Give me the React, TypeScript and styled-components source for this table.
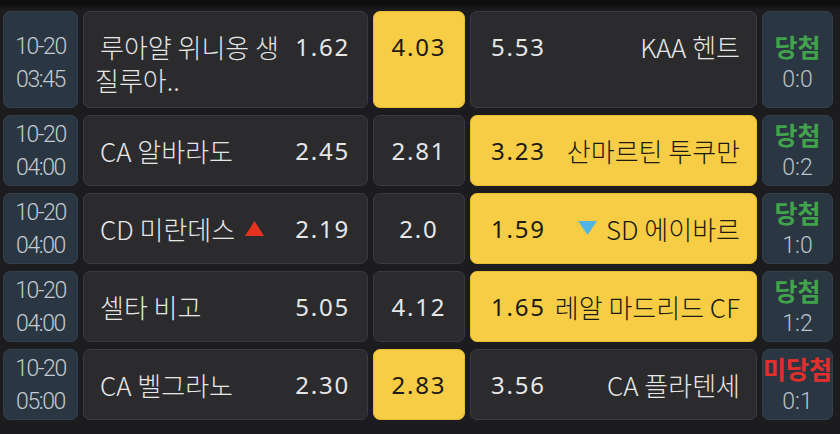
import React from "react";
import styled, { createGlobalStyle, css } from "styled-components";

const GlobalStyle = createGlobalStyle`
  html, body {
    margin: 0;
    padding: 0;
    background: linear-gradient(#0b0b0c 0px, #0f0f11 5px, #1c1c1e 10px, #1c1c1e 100%);
    min-height: 100%;
  }
  body {
    width: 840px;
    height: 434px;
    overflow: hidden;
    font-family: "Noto Sans CJK KR", "Noto Sans", sans-serif;
  }
`;

const Board = styled.div`
  display: flex;
  flex-direction: column;
  gap: 7px;
  padding: 11px 7px 0 3px;
`;

const Row = styled.div<{ $tall?: boolean }>`
  display: grid;
  grid-template-columns: 75px 285px 92px 287px 71px;
  column-gap: 5px;
  height: ${(p) => (p.$tall ? 97 : 71)}px;
`;

const cellBase = css<{ $tall?: boolean }>`
  box-sizing: border-box;
  border-radius: 7px;
  display: flex;
  ${(p) =>
    p.$tall
      ? css`
          align-items: flex-start;
          padding-top: 18px;
        `
      : css`
          align-items: center;
        `}
`;

const InfoCell = styled.div<{ $tall?: boolean }>`
  ${cellBase};
  flex-direction: column;
  justify-content: ${(p) => (p.$tall ? "flex-start" : "center")};
  align-items: center;
  background: #2a3641;
  border: 1px solid #33404b;
`;

const TimeLine = styled.div`
  font-family: Roboto, "Noto Sans", sans-serif;
  font-weight: 300;
  font-size: 23px;
  line-height: 33px;
  letter-spacing: -1.4px;
  color: #c3cad1;
`;

const StatusText = styled.div<{ $win: boolean }>`
  font-family: "Noto Sans CJK KR", sans-serif;
  font-weight: 700;
  font-size: 25px;
  line-height: 33px;
  color: ${(p) => (p.$win ? "#41a34c" : "#e1302c")};
`;

const ScoreText = styled.div`
  font-family: Roboto, "Noto Sans", sans-serif;
  font-weight: 300;
  font-size: 23px;
  line-height: 33px;
  color: #b9c3cb;
`;

const OddsCell = styled.div<{ $tall?: boolean; $picked?: boolean; $side: "home" | "draw" | "away" }>`
  ${cellBase};
  background: ${(p) => (p.$picked ? "#f6cd45" : "#2b2b2d")};
  border: 1px solid ${(p) => (p.$picked ? "#e9bd33" : "#3b3b3e")};
  justify-content: ${(p) => (p.$side === "draw" ? "center" : "space-between")};
  padding-left: ${(p) => (p.$side === "home" ? 11 : p.$side === "away" ? 20 : 0)}px;
  padding-right: ${(p) => (p.$side === "home" ? 17 : p.$side === "away" ? 16 : 0)}px;
  color: ${(p) => (p.$picked ? "#1b1a14" : "#e6e6e6")};
`;

const Name = styled.span`
  font-family: "Noto Sans CJK KR", sans-serif;
  font-weight: 300;
  font-size: 26px;
  line-height: 33px;
  white-space: pre-line;
  text-indent: 5px;
  display: flex;
  align-items: center;
`;

const AwayName = styled(Name)`
  text-indent: 0;
`;

const Odds = styled.span`
  font-family: "Noto Sans", sans-serif;
  font-weight: 400;
  font-size: 24px;
  line-height: 33px;
  letter-spacing: 1.8px;
`;

const Arrow = styled.svg<{ $before?: boolean }>`
  width: 19px;
  height: 15px;
  flex: none;
  margin: ${(p) => (p.$before ? "0 9px 0 0" : "0 0 0 10px")};
`;

const UpArrow = () => (
  <Arrow viewBox="0 0 19 15">
    <polygon points="9.5,0 19,15 0,15" fill="#e5331f" />
  </Arrow>
);

const DownArrow = () => (
  <Arrow viewBox="0 0 19 15" $before>
    <polygon points="0,0 19,0 9.5,14" fill="#52b6e4" />
  </Arrow>
);

type Match = {
  date: string;
  time: string;
  home: string;
  homeOdds: string;
  draw: string;
  awayOdds: string;
  away: string;
  pick: "home" | "draw" | "away";
  win: boolean;
  score: string;
  homeUp?: boolean;
  awayDown?: boolean;
  tall?: boolean;
};

const matches: Match[] = [
  { date: "10-20", time: "03:45", home: "루아얄 위니옹 생\n질루아..", homeOdds: "1.62", draw: "4.03", awayOdds: "5.53", away: "KAA 헨트", pick: "draw", win: true, score: "0:0", tall: true },
  { date: "10-20", time: "04:00", home: "CA 알바라도", homeOdds: "2.45", draw: "2.81", awayOdds: "3.23", away: "산마르틴 투쿠만", pick: "away", win: true, score: "0:2" },
  { date: "10-20", time: "04:00", home: "CD 미란데스", homeOdds: "2.19", draw: "2.0", awayOdds: "1.59", away: "SD 에이바르", pick: "away", win: true, score: "1:0", homeUp: true, awayDown: true },
  { date: "10-20", time: "04:00", home: "셀타 비고", homeOdds: "5.05", draw: "4.12", awayOdds: "1.65", away: "레알 마드리드 CF", pick: "away", win: true, score: "1:2" },
  { date: "10-20", time: "05:00", home: "CA 벨그라노", homeOdds: "2.30", draw: "2.83", awayOdds: "3.56", away: "CA 플라텐세", pick: "draw", win: false, score: "0:1" },
];

export default function App() {
  return (
    <>
      <GlobalStyle />
      <Board>
        {matches.map((m, i) => (
          <Row key={i} $tall={m.tall}>
            <InfoCell $tall={m.tall}>
              <TimeLine>{m.date}</TimeLine>
              <TimeLine>{m.time}</TimeLine>
            </InfoCell>
            <OddsCell $tall={m.tall} $side="home" $picked={m.pick === "home"}>
              <Name>
                {m.home}
                {m.homeUp && <UpArrow />}
              </Name>
              <Odds>{m.homeOdds}</Odds>
            </OddsCell>
            <OddsCell $tall={m.tall} $side="draw" $picked={m.pick === "draw"}>
              <Odds>{m.draw}</Odds>
            </OddsCell>
            <OddsCell $tall={m.tall} $side="away" $picked={m.pick === "away"}>
              <Odds>{m.awayOdds}</Odds>
              <AwayName>
                {m.awayDown && <DownArrow />}
                {m.away}
              </AwayName>
            </OddsCell>
            <InfoCell $tall={m.tall}>
              <StatusText $win={m.win}>{m.win ? "당첨" : "미당첨"}</StatusText>
              <ScoreText>{m.score}</ScoreText>
            </InfoCell>
          </Row>
        ))}
      </Board>
    </>
  );
}
